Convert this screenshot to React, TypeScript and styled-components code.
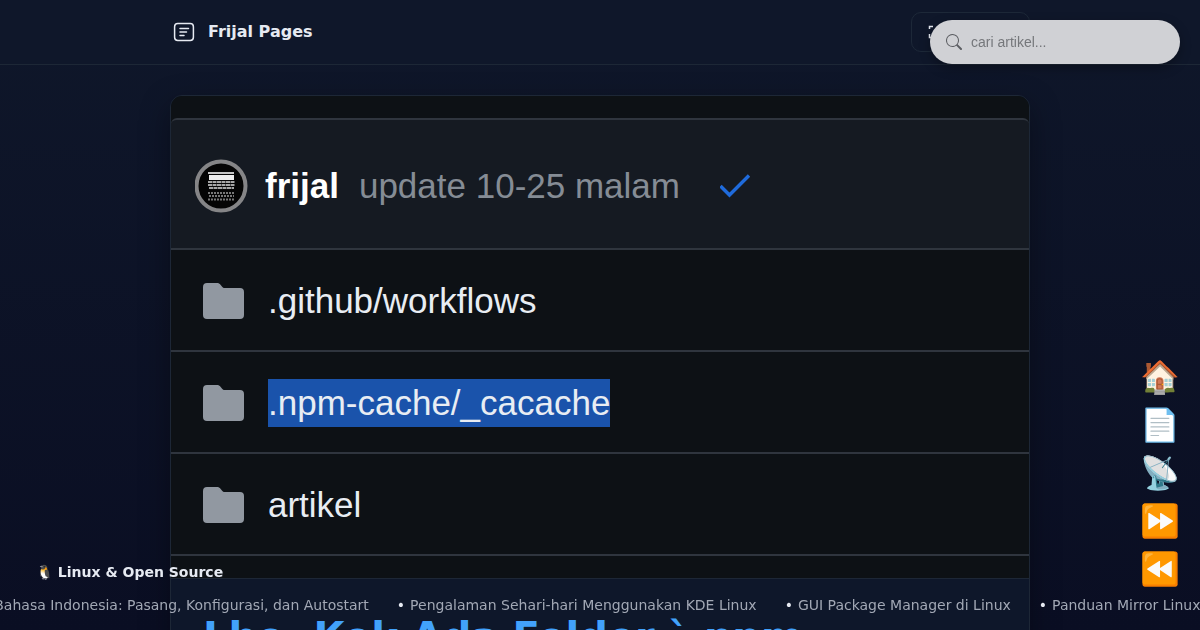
import React from "react";
import styled, { createGlobalStyle } from "styled-components";
import { BsSearch } from "react-icons/bs";

const GlobalStyle = createGlobalStyle`
  * { box-sizing: border-box; }
  html { background: #080b1e; }
  body {
    margin: 0;
    min-height: 100vh;
    overflow-x: hidden;
    color: #e6eaf2;
    font: 16px/24px "DejaVu Sans", sans-serif;
    background: linear-gradient(180deg, #0f172a 0, #0a0e23 630px);
  }
`;

const SiteHeader = styled.header`
  border-bottom: 1px solid #1d2736;
  background: #0f172a;
`;

const HeaderInner = styled.div`
  display: flex;
  align-items: center;
  justify-content: space-between;
  max-width: 860px;
  height: 64px;
  margin: 0 auto;
`;

const Brand = styled.a`
  display: flex;
  align-items: center;
  gap: 10px;
  color: inherit;
  font-weight: 700;
  text-decoration: none;
`;

const FullscreenButton = styled.button`
  display: flex;
  align-items: center;
  width: 119px;
  height: 40px;
  padding: 0 16px;
  border: 1px solid #1d2838;
  border-radius: 10px;
  color: #e6eaf2;
  background: transparent;
`;

const SearchBox = styled.form`
  position: fixed;
  top: 20px;
  right: 20px;
  z-index: 3;
  display: flex;
  align-items: center;
  gap: 9px;
  width: 250px;
  height: 44px;
  padding: 0 16px;
  border-radius: 22px;
  color: #5c5e63;
  background: #d0d1d5;
  box-shadow: 0 4px 12px rgba(0, 0, 0, 0.3);
`;

const SearchInput = styled.input`
  flex: 1;
  min-width: 0;
  padding: 0;
  border: 0;
  outline: 0;
  background: transparent;
  color: #222;
  font: 14px/20px "Liberation Sans", sans-serif;
  &::placeholder { color: #75777b; opacity: 1; }
`;

const Article = styled.article`
  max-width: 860px;
  margin: 30px auto 0;
  border: 1px solid #1d2736;
  border-radius: 12px;
  overflow: hidden;
  background: #0e172a;
  box-shadow: 0 10px 30px rgba(0, 0, 0, 0.35);
`;

const Cover = styled.div`
  padding: 22px 0;
  border-bottom: 1px solid #1d2736;
  background: #0d1115;
  color: #e8edf3;
  font: 35px/48px "Liberation Sans", sans-serif;
`;

const CommitRow = styled.div`
  display: flex;
  align-items: center;
  gap: 40px;
  height: 130px;
  padding: 4px 24px 0;
  border-top: 2px solid #2f353e;
  border-radius: 6px 6px 0 0;
  background: #151a22;
  color: #858c95;
`;

const CommitText = styled.div`
  display: flex;
  align-items: center;
  gap: 20px;
`;

const AuthorLink = styled.a`
  display: flex;
  align-items: center;
  gap: 16px;
  color: #fff;
  font-weight: 700;
  text-decoration: none;
`;

const FileList = styled.ul`
  margin: 0;
  padding: 0;
  list-style: none;
  border-bottom: 2px solid #2f353e;
`;

const FileRow = styled.li`
  display: flex;
  align-items: center;
  gap: 24px;
  height: 102px;
  padding: 2px 32px 0;
  border-top: 2px solid #2f353e;
`;

const FileName = styled.span<{ $selected?: boolean }>`
  background: ${(p) => (p.$selected ? "#1a53ab" : "transparent")};
`;

const Title = styled.h1`
  margin: 0;
  padding: 30px 32px;
  color: #42a2fb;
  font-size: 40px;
  line-height: 56px;
`;

const SideNav = styled.nav`
  position: fixed;
  right: 20px;
  bottom: 41px;
  z-index: 2;
  display: flex;
  flex-direction: column;
  gap: 8px;
`;

const SideLink = styled.a`
  display: flex;
  align-items: center;
  justify-content: center;
  width: 40px;
  height: 40px;
  font: 32px/40px "Noto Color Emoji", "DejaVu Sans", sans-serif;
  text-decoration: none;
`;

const NewsBar = styled.aside`
  position: fixed;
  left: 0;
  right: 0;
  bottom: 0;
  z-index: 1;
  height: 70px;
  overflow: hidden;
  font-size: 14px;
`;

const NewsHeading = styled.h2`
  margin: 0;
  padding: 0 36px;
  font-size: 14px;
  line-height: 24px;
`;

const NewsTrack = styled.ul`
  display: flex;
  gap: 28px;
  width: max-content;
  margin: 9px 0 0;
  padding: 0;
  list-style: none;
  transform: translateX(-19px);
`;

const NewsItem = styled.li`
  display: flex;
  gap: 5px;
  line-height: 24px;
`;

const NewsLink = styled.a`
  color: #a2a8b5;
  text-decoration: none;
`;

const files = [
  { name: ".github/workflows" },
  { name: ".npm-cache/_cacache", selected: true },
  { name: "artikel" },
];

const news = [
  "Bahasa Indonesia: Pasang, Konfigurasi, dan Autostart",
  "Pengalaman Sehari-hari Menggunakan KDE Linux",
  "GUI Package Manager di Linux",
  "Panduan Mirror Linux Indonesia",
];

const shortcuts = [
  { icon: "🏠", label: "Beranda" },
  { icon: "📄", label: "Artikel" },
  { icon: "📡", label: "RSS" },
  { icon: "⏩", label: "Berikutnya" },
  { icon: "⏪", label: "Sebelumnya" },
];

const LogoIcon = () => (
  <svg width="28" height="28" viewBox="0 0 28 28" fill="none" stroke="currentColor" strokeWidth="1.5" strokeLinecap="round" aria-hidden="true">
    <rect x="4.6" y="5.6" width="18.8" height="16.8" rx="3.2" />
    <path d="M10 10.5h8.5M10 14h6.5M10 17.5h4" />
  </svg>
);

const ExpandIcon = () => (
  <svg width="16" height="16" viewBox="0 0 16 16" fill="none" stroke="currentColor" strokeWidth="1.5" aria-hidden="true">
    <path d="M1.5 5V2.5H5M1.5 10v3.5H5M11 2.5h3.5V5M14.5 10v3.5H11" />
  </svg>
);

const Avatar = () => (
  <svg width="54" height="54" viewBox="0 0 54 54" aria-hidden="true">
    <circle cx="26" cy="27" r="24.5" fill="#050505" stroke="#858587" strokeWidth="4" />
    <path fill="#c4c4c4" d="M13 13h26v2H13z" />
    <path fill="#ececec" d="M14 16h25v5H14z" />
    <path stroke="#a5a5a5" strokeWidth="2" strokeDasharray="4 0.5" d="M13 23h27M13 26h27M14 29h25" />
    <path stroke="#777" strokeWidth="2" strokeDasharray="2 1" d="M13 34h27M14 37h25M13 40.5h26" />
  </svg>
);

const CheckIcon = () => (
  <svg width="32" height="26" viewBox="0 0 32 26" fill="none" stroke="#1f6bdc" strokeWidth="3.4" aria-hidden="true">
    <path d="M0.5 13l9 9L29 2.5" />
  </svg>
);

const FolderIcon = () => (
  <svg width="41" height="36" viewBox="0 0 41 36" fill="#9198a1" aria-hidden="true">
    <path d="M4 0h10c1.5 0 2.600.6 3.5 1.7l1.6 2.1c.7.9 1.5 1.300 2.600 1.300H37a4 4 0 0 1 4 4V32a4 4 0 0 1-4 4H4a4 4 0 0 1-4-4V4a4 4 0 0 1 4-4z" />
  </svg>
);

export default function App() {
  return (
    <>
      <GlobalStyle />
      <SiteHeader>
        <HeaderInner>
          <Brand href="#">
            <LogoIcon />
            Frijal Pages
          </Brand>
          <FullscreenButton type="button" aria-label="Layar penuh">
            <ExpandIcon />
          </FullscreenButton>
        </HeaderInner>
      </SiteHeader>
      <SearchBox role="search">
        <BsSearch size={16} aria-hidden="true" />
        <SearchInput type="search" aria-label="Cari artikel" placeholder="cari artikel..." />
      </SearchBox>
      <main>
        <Article>
          <Cover>
            <CommitRow>
              <CommitText>
                <AuthorLink href="#">
                  <Avatar />
                  frijal
                </AuthorLink>
                <span>update 10-25 malam</span>
              </CommitText>
              <CheckIcon />
            </CommitRow>
            <FileList>
              {files.map((f) => (
                <FileRow key={f.name}>
                  <FolderIcon />
                  <FileName $selected={f.selected}>{f.name}</FileName>
                </FileRow>
              ))}
            </FileList>
          </Cover>
          <Title>Lho, Kok Ada Folder `.npm-cache/_cacache` di Repo?</Title>
        </Article>
      </main>
      <SideNav aria-label="Pintasan">
        {shortcuts.map((s) => (
          <SideLink key={s.label} href="#" aria-label={s.label}>
            {s.icon}
          </SideLink>
        ))}
      </SideNav>
      <NewsBar>
        <NewsHeading>🐧 Linux &amp; Open Source</NewsHeading>
        <NewsTrack>
          {news.map((n) => (
            <NewsItem key={n}>
              <span aria-hidden="true">•</span>
              <NewsLink href="#">{n}</NewsLink>
            </NewsItem>
          ))}
        </NewsTrack>
      </NewsBar>
    </>
  );
}
